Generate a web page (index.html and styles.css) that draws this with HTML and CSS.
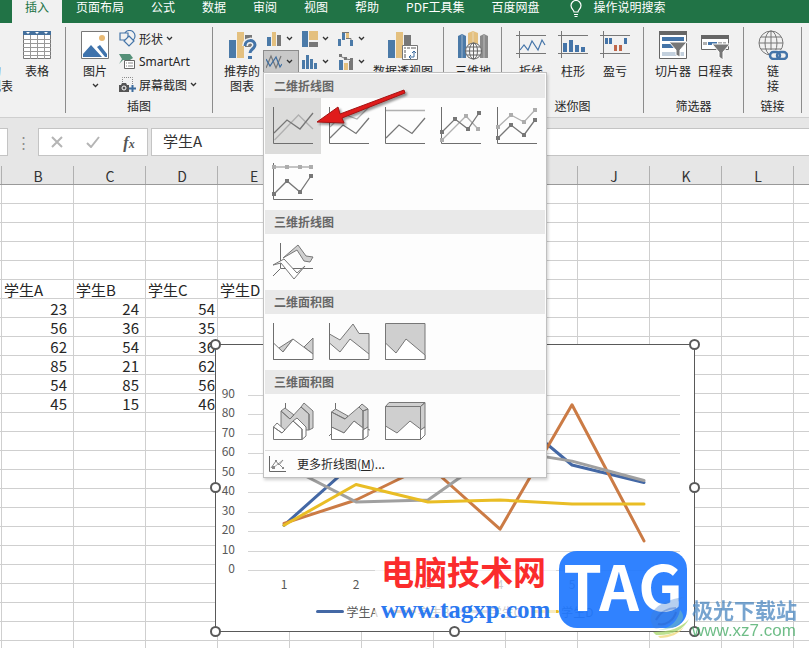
FILE: index.html
```
<!DOCTYPE html>
<html lang="zh-CN">
<head>
    <meta charset="UTF-8">
    <meta name="viewport" content="width=device-width, initial-scale=1.0">
    <title>学生成绩 - Excel</title>
    <link rel="stylesheet" href="styles.css">
</head>
<body>
    <svg class="defs" aria-hidden="true">
        <symbol id="chevron" viewBox="0 0 7 5"><path d="M1 1l2.5 2.5L6 1" fill="none" stroke="#333" stroke-width="1.3"/></symbol>
    </svg>

    <nav class="tabs">
        <a class="tab active" href="#">插入</a>
        <a class="tab" href="#">页面布局</a>
        <a class="tab" href="#">公式</a>
        <a class="tab" href="#">数据</a>
        <a class="tab" href="#">审阅</a>
        <a class="tab" href="#">视图</a>
        <a class="tab" href="#">帮助</a>
        <a class="tab" href="#">PDF工具集</a>
        <a class="tab" href="#">百度网盘</a>
        <a class="tab search" href="#">
            <svg width="12" height="18" viewBox="0 0 12 18" fill="none" stroke="#fff" stroke-width="1.2"><path d="M4 12c0-2-3-3-3-6.500a5 5 0 0 1 10 0C11 9 8 10 8 12zM4 14.500h4M4.500 16.500h3"/></svg>
            操作说明搜索
        </a>
    </nav>

    <div class="ribbon">
        <section class="group group-tables">
            <div class="tools">
                <button class="big"><span class="icon"></span>推荐的<br>数据透视表</button>
                <button class="big wide">
                    <svg class="icon" viewBox="0 0 30 30"><path d="M1.500 1.500h27v27h-27z" fill="#fff" stroke="#777"/><path d="M1 1h28v4H1z" fill="#44709d"/><path d="M4 2h4l-2 2zM13 2h4l-2 2zM22 2h4l-2 2z" fill="#fff"/><path d="M1 9.500h28M1 13.500h28M1 17.500h28M1 21.500h28M1 25.500h28M8.500 5v24M15.500 5v24M22.500 5v24" stroke="#999"/></svg>
                    表格
                </button>
            </div>
        </section>

        <section class="group group-pictures">
            <div class="tools">
                <button class="big narrow">
                    <svg class="icon" viewBox="0 0 30 30"><path d="M1.500 1.500h27v27h-27z" fill="#fff" stroke="#777"/><circle cx="22" cy="8" r="3" fill="#e8b973"/><path d="M3 27v-3l8-9 11 12zM17 17l3-2 7 9v3h-2z" fill="#3f73ac"/></svg>
                    图片
                    <svg class="chevron"><use href="#chevron"/></svg>
                </button>
                <div class="stack">
                    <button class="small">
                        <svg width="17" height="17" viewBox="0 0 17 17" fill="#f1f1f1" stroke="#4474a8" stroke-width="1.200"><circle cx="10.500" cy="6" r="5.500"/><path d="M1 3h8v7H1z"/><path d="M10 6l5 5-5 5-5-5z"/></svg>
                        形状 <svg class="chevron"><use href="#chevron"/></svg>
                    </button>
                    <button class="small">
                        <svg width="17" height="17" viewBox="0 0 17 17"><path d="M0 1h11l3 4-3 2H4l-4 4 3-5z" fill="#559078"/><path d="M5.500 7.500h10v8h-10z" fill="#fff" stroke="#666"/><path d="M7 10h1M9 10h5M7 13h1M9 13h5" stroke="#888"/></svg>
                        <span class="latin">SmartArt</span>
                    </button>
                    <button class="small">
                        <svg width="17" height="17" viewBox="0 0 17 17"><path d="M3.500 6V1.500h10V9" fill="none" stroke="#888" stroke-dasharray="1 1"/><path d="M0 9h2l1-2h4l1 2h2v7H0z" fill="#555"/><circle cx="5" cy="12" r="2" fill="#555" stroke="#fff"/><path d="M13.500 9v7M10 12.500h7" stroke="#3d6c9e" stroke-width="2"/></svg>
                        屏幕截图 <svg class="chevron"><use href="#chevron"/></svg>
                    </button>
                </div>
            </div>
            <h2>插图</h2>
        </section>

        <section class="group group-charts">
            <div class="tools">
                <button class="big">
                    <svg class="icon" viewBox="0 0 30 30"><path d="M2 10h7v18H2z" fill="#4b7aa8"/><path d="M10 2h7v26h-7z" fill="#e4c07f"/><path d="M18 5h7v12h-7z" fill="#777"/><path d="M18 16c0-7 10-7 10-1 0 4-5 4-5 8M21 27.500h4" fill="none" stroke="#f1f1f1" stroke-width="6"/><path d="M18 16c0-7 10-7 10-1 0 4-5 4-5 8" fill="none" stroke="#4474a8" stroke-width="3"/><path d="M21 26h4v3h-4z" fill="#4474a8"/></svg>
                    推荐的<br>图表
                </button>
                <div class="chart-types">
                    <button class="type" aria-label="柱形图"><svg width="16" height="16" viewBox="0 0 16 16"><path d="M1 6h4v9H1z" fill="#4b7aa8"/><path d="M6 1h4v14H6z" fill="#e4c07f"/><path d="M11 4h4v11h-4z" fill="#777"/></svg><svg class="chevron"><use href="#chevron"/></svg></button>
                    <button class="type" aria-label="层次结构图"><svg width="16" height="16" viewBox="0 0 16 16"><path d="M0 0h6v16H0z" fill="#4b7aa8"/><path d="M7 0h9v9H7z" fill="#e4c07f"/><path d="M7 11h9v5H7z" fill="#777"/></svg><svg class="chevron"><use href="#chevron"/></svg></button>
                    <button class="type" aria-label="瀑布图"><svg width="16" height="16" viewBox="0 0 16 16"><path d="M0 8h3v7H0zM4 2h3v7H4z" fill="#4b7aa8"/><path d="M8 2h3v5H8z" fill="#e4c07f"/><path d="M12 9h3v6h-3z" fill="#4b7aa8"/><path d="M4 1.500h7M8 7.500h5V9" fill="none" stroke="#777"/></svg><svg class="chevron"><use href="#chevron"/></svg></button>

                    <div class="dropdown">
                        <button class="type pressed" aria-label="折线图" aria-expanded="true"><svg width="16" height="16" viewBox="0 0 16 16" fill="none"><path d="M0 14L5 2l5 12 5-12" stroke="#777" stroke-width="1.200"/><path d="M0 5l4 7 6-9 4 10 2-3" stroke="#3d6c9e" stroke-width="1.200"/></svg><svg class="chevron"><use href="#chevron"/></svg></button>

                        <div class="menu">
                            <h3>二维折线图</h3>
                            <div class="gallery">
                                <button class="choice selected" aria-label="折线图">
                                    <svg viewBox="0 0 56 56"><path class="light" d="M9.500 42l24-25L48 31"/><path class="dark" d="M9 35l13-13 13 9 13-16"/><path class="axis" d="M8.500 9v36.500H48"/></svg>
                                </button>
                                <button class="choice" aria-label="堆积折线图">
                                    <svg viewBox="0 0 56 56"><path class="light" d="M9 29l13-13 14 5L48 9"/><path class="dark" d="M9 40l13-13 13 8.500L48 20"/><path class="axis" d="M8.500 9v36.500H48"/></svg>
                                </button>
                                <button class="choice" aria-label="百分比堆积折线图">
                                    <svg viewBox="0 0 56 56"><path class="light" d="M9 12.500h39"/><path class="dark" d="M9 40l13-13 13 8.500L48 20"/><path class="axis" d="M8.500 9v36.500H48"/></svg>
                                </button>
                                <button class="choice" aria-label="带数据标记的折线图">
                                    <svg viewBox="0 0 56 56"><path class="light" d="M9 42l24-24 12 13"/><path class="dark" d="M9 34l13-13 13 10 11-16"/><path class="axis" d="M8.500 9v36.500H48"/><path class="mark-light" d="M7 40h4v4H7zM31 16h4v4h-4zM43 29h4v4h-4z"/><path class="mark" d="M7 32h4v4H7zM20 19h4v4h-4zM33 29h4v4h-4zM44 13h4v4h-4z"/></svg>
                                </button>
                                <button class="choice" aria-label="带标记的堆积折线图">
                                    <svg viewBox="0 0 56 56"><path class="light" d="M9 29l13-12 13 7 11-12"/><path class="dark" d="M9 40l13-13 13 10 11-15"/><path class="axis" d="M8.500 9v36.500H48"/><path class="mark-light" d="M7 27h4v4H7zM20 15h4v4h-4zM33 22h4v4h-4zM44 10h4v4h-4z"/><path class="mark" d="M7 38h4v4H7zM20 25h4v4h-4zM33 35h4v4h-4zM44 20h4v4h-4z"/></svg>
                                </button>
                                <button class="choice" aria-label="带数据标记的百分比堆积折线图">
                                    <svg viewBox="0 0 56 56"><path class="light" d="M9 13h37"/><path class="dark" d="M9 40l13-13 13 11 11-16"/><path class="axis" d="M8.500 9v36.500H48"/><path class="mark-light" d="M7 11h4v4H7zM20 11h4v4h-4zM33 11h4v4h-4zM44 11h4v4h-4z"/><path class="mark" d="M7 38h4v4H7zM20 25h4v4h-4zM33 36h4v4h-4zM44 20h4v4h-4z"/></svg>
                                </button>
                            </div>

                            <h3>三维折线图</h3>
                            <div class="gallery">
                                <button class="choice" aria-label="三维折线图">
                                    <svg viewBox="0 0 56 56"><path class="axis" d="M15.500 9v25.500H48M15 35l-7 7"/><path class="face" d="M18 24l15-13 8 11 7 1-3 5-6-1-7-11z"/><path class="front" d="M8 31l11-6 13 14 8-7-11 13-13-16z"/></svg>
                                </button>
                            </div>

                            <h3>二维面积图</h3>
                            <div class="gallery">
                                <button class="choice" aria-label="面积图">
                                    <svg viewBox="0 0 56 56"><path class="face" d="M14 34l14-9-10 13zM39 33l9-9v16z"/><path class="front" d="M8.500 29l9.500 9 10-13 20 15v5.500H8.500z"/><path class="axis" d="M8.500 9v36.500H48"/></svg>
                                </button>
                                <button class="choice" aria-label="堆积面积图">
                                    <svg viewBox="0 0 56 56"><path class="face pale" d="M8.500 20L19 26l13-16 6 9.500h10V40L29 25 19 38l-10.500-9z"/><path class="axis" d="M8.500 9v36.500H48V40"/></svg>
                                </button>
                                <button class="choice" aria-label="百分比堆积面积图">
                                    <svg viewBox="0 0 56 56"><path class="face" d="M8.500 9.500H48v36H8.500z"/><path class="front" d="M8.500 29L19 39l10-14 19 16v4.500H8.500z"/></svg>
                                </button>
                            </div>

                            <h3>三维面积图</h3>
                            <div class="gallery">
                                <button class="choice" aria-label="三维面积图">
                                    <svg viewBox="0 0 56 56"><path class="axis" d="M20.500 9v6"/><path class="face" d="M16 17l4-3 9 7-4 4zM16 17l9 8 11-12 8 7v16H16zM36 13l3-4 9 8v17l-4 2V20z"/><path class="front" d="M8.500 33l3.500-4 8 7-3 3zM28 27l4-3 9 9v9l-4 3.500V35zM8.500 33l8.500 6 11-12 9 8v10.500H8.500z"/></svg>
                                </button>
                                <button class="choice" aria-label="三维堆积面积图">
                                    <svg viewBox="0 0 56 56"><path class="axis" d="M14.500 9v7M8 42l3-3M45 35l4 1"/><path class="face" d="M10.500 18l4-3L27 22l-3 3zM38 13l3-3 6 5-5 2zM42 17l5-2v18l-5 3zM10.500 18L24 25l14-12 4 4v17l-9-7-10 12-12.500-6z"/><path class="front" d="M42 36l5-3v9l-5 3.500zM10.500 33L23 39l10-12 9 7v11.500H10.500z"/></svg>
                                </button>
                                <button class="choice" aria-label="三维百分比堆积面积图">
                                    <svg viewBox="0 0 56 56"><path class="face" d="M8.500 12.500l3.500-4h36l-4.500 4zM43.500 12.500l4.500-4V33l-4.500 3zM8.500 12.500h35v33h-35z"/><path class="front" d="M43.500 36l4.500-3v8l-4.500 4.500zM8.500 32L20 39l13-12 10.500 8v10.500h-35z"/></svg>
                                </button>
                            </div>

                            <button class="more">
                                <svg width="17" height="16" viewBox="0 0 17 16" fill="none"><path d="M4 12l10-8" stroke="#aaa"/><path d="M2 12l5-7 3 4 4-5M9 7l6 6" stroke="#888"/><path d="M3 10h3v3H3zM13 11h2v2h-2zM6 4h2v2H6z" fill="#888"/><path d="M.5 0v15.500H17" stroke="#666"/></svg>
                                <span>更多折线图(<u>M</u>)...</span>
                            </button>
                        </div>
                    </div>
                    <button class="type" aria-label="统计图"><svg width="16" height="16" viewBox="0 0 16 16"><path d="M0 6h3v9H0zM4 1h3v14H4zM8 5h3v10H8zM12 9h3v6h-3z" fill="#4b7aa8"/></svg><svg class="chevron"><use href="#chevron"/></svg></button>
                    <button class="type" aria-label="组合图"><svg width="16" height="16" viewBox="0 0 16 16"><path d="M1 6h4v10H1z" fill="#4b7aa8"/><path d="M6 9h4v7H6z" fill="#e4c07f"/><path d="M11 7h4v9h-4z" fill="#777"/><path d="M2 2l6 3 6 1" fill="none" stroke="#777"/><path d="M1 0h3v3H1zM6 3h3v3H6zM12 4h3v3h-3z" fill="#777"/></svg><svg class="chevron"><use href="#chevron"/></svg></button>
                </div>
                <button class="big pivot">
                    <svg class="icon" viewBox="0 0 30 30"><path d="M0 10h7v18H0z" fill="#4b7aa8"/><path d="M8 2h7v26H8z" fill="#e4c07f"/><path d="M16 5h7v10h-7z" fill="#777"/><path d="M14.500 15.500h15v14h-15z" fill="#fff" stroke="#777"/><path d="M16 17h2v2h-2zM19 17h3v2h-3zM23 17h5v2h-5zM16 20h2v3h-2zM16 24h2v4h-2z" fill="#aaa"/><path d="M21 27h5v-6M23 25l-2 2 2 2M24 23l2-2 2 2" fill="none" stroke="#3d6c9e"/></svg>
                    数据透视图
                </button>
            </div>
        </section>

        <section class="group group-map">
            <div class="tools">
                <button class="big">
                    <svg class="icon" viewBox="0 0 30 30"><path d="M0 6l4-2 4 2v22H0z" fill="#4b7aa8"/><path d="M10 3l5-2 5 2v25H10z" fill="#e4c07f"/><path d="M22 6l4-2 4 2v22h-8z" fill="#8a8a8a"/><path d="M4 5v23M26 5v23M15 2v12" stroke="#f1f1f1" stroke-opacity=".5"/><g fill="#f6f6f6" stroke="#666"><circle cx="15.500" cy="21" r="8"/><ellipse cx="15.500" cy="21" rx="4" ry="8" fill="none"/><path d="M7.500 21h16M15.500 13v16M9 17h13M9 25h13"/></g></svg>
                    三维地<br>图
                </button>
            </div>
        </section>

        <section class="group group-spark">
            <div class="tools">
                <button class="big">
                    <svg class="icon" viewBox="0 0 30 30" fill="none"><path d="M3.500 1v27M0 5.500h30M0 23.500h30" stroke="#777"/><path d="M4 20l4-5 4 5 4-9 6 9 4-10 3 5" stroke="#4474a8" stroke-width="1.200"/></svg>
                    折线
                </button>
                <button class="big">
                    <svg class="icon" viewBox="0 0 30 30"><path d="M3.500 1v27M0 5.500h30M0 23.500h30" stroke="#777"/><path d="M5 13h4v9H5zM11 10h4v12h-4zM17 15h4v7h-4zM23 17h4v5h-4z" fill="#4474a8"/></svg>
                    柱形
                </button>
                <button class="big">
                    <svg class="icon" viewBox="0 0 30 30"><path d="M3.500 1v27M0 5.500h30M0 23.500h30" stroke="#777"/><path d="M5 8h3v6H5zM9 8h3v6H9zM24 8h3v6h-3z" fill="#4474a8"/><path d="M14 15h3v6h-3zM19 15h3v6h-3z" fill="#c0674a"/></svg>
                    盈亏
                </button>
            </div>
            <h2>迷你图</h2>
        </section>

        <section class="group group-filter">
            <div class="tools">
                <button class="big">
                    <svg class="icon" viewBox="0 0 30 30"><path d="M1.500 1.500h27v27h-27z" fill="#fff" stroke="#666"/><path d="M1 1h28v4H1z" fill="#666"/><path d="M4 7h22v4H4z" fill="#4474a8"/><path d="M4 14h12v4H4z" fill="#4474a8"/><path d="M4 22h22v4H4z" fill="#c3d0dd"/><path d="M11 12h18l-7 8v7l-4-2v-5z" fill="#777" stroke="#fff"/></svg>
                    切片器
                </button>
                <button class="big">
                    <svg class="icon" viewBox="0 0 30 30"><path d="M1.500 5.500h27v14h-27z" fill="#fff" stroke="#666"/><path d="M1 5h28v4H1z" fill="#666"/><path d="M3 12h4v3H3zM18 12h4v3h-4zM23 12h3v3h-3z" fill="#b0b0b0"/><path d="M8 12h9v3H8z" fill="#4474a8"/><path d="M12 14h18l-7 8v8l-4-3v-5z" fill="#777" stroke="#fff"/></svg>
                    日程表
                </button>
            </div>
            <h2>筛选器</h2>
        </section>

        <section class="group group-links">
            <div class="tools">
                <button class="big">
                    <svg class="icon" viewBox="0 0 30 30" fill="none"><g stroke="#777"><circle cx="13" cy="13" r="12"/><ellipse cx="13" cy="13" rx="6" ry="12"/><path d="M1 13h24M13 1v24M3 7h20M3 19h20"/></g><path d="M12 20h18v10H12z" fill="#f1f1f1"/><g stroke="#4474a8" stroke-width="2.500"><rect x="12" y="22" width="10" height="7" rx="3.500"/><rect x="19" y="22" width="10" height="7" rx="3.500"/></g></svg>
                    链<br>接
                </button>
            </div>
            <h2>链接</h2>
        </section>
    </div>

    <div class="formula-bar">
        <div class="name-box"></div>
        <div class="dots">⋮</div>
        <div class="formula-tools">
            <button aria-label="取消"><svg width="12" height="12" viewBox="0 0 12 12"><path d="M1 1l10 10M11 1L1 11" stroke="#b5b5b5" stroke-width="2"/></svg></button>
            <button aria-label="输入"><svg width="14" height="12" viewBox="0 0 14 12"><path d="M1 7l4 4 8-10" fill="none" stroke="#b5b5b5" stroke-width="2"/></svg></button>
            <button class="fx" aria-label="插入函数">f<small>x</small></button>
        </div>
        <input class="formula" type="text" value="学生A" aria-label="编辑栏">
    </div>

    <main class="sheet">
        <table>
            <colgroup id="cols"></colgroup>
            <thead><tr id="letters"></tr></thead>
            <tbody id="cells"></tbody>
        </table>

        <div class="chart">
            <svg id="plot" viewBox="0 0 480 288"></svg>
            <div class="legend" id="legend"></div>
            <span class="handle nw"></span>
            <span class="handle ne"></span>
            <span class="handle w"></span>
            <span class="handle e"></span>
            <span class="handle sw"></span>
            <span class="handle s"></span>
            <span class="handle se"></span>
        </div>

        <div class="site-mark">
            <strong>电脑技术网</strong>
            <span>www.tagxp.com</span>
        </div>
        <div class="tag-mark">TAG</div>
        <div class="download-mark">
            <svg width="42" height="42" viewBox="0 0 42 42"><path d="M1 26C-1 12 14 4 34 1 22 6 34 12 28 20 22 29 8 34 4 32z" fill="#3f7fd6" opacity=".5"/><path d="M6 24c4-8 12-12 20-12M8 28c8 2 16-4 18-12" fill="none" stroke="#2a62c8" stroke-width="2" opacity=".6"/><path d="M8 34c14-2 20-10 22-20 8 8 0 20-22 20z" fill="#7ec8b0" opacity=".6"/><path d="M3 36c16 0 28-4 36-13-5 11-18 17-33 16z" fill="#a8d86a"/><path d="M8 40c12-1 20-4 26-9-5 7-14 11-24 11z" fill="#f0d878"/></svg>
            <div>
                <strong>极光下载站</strong>
                <span>www.xz7.com</span>
            </div>
        </div>
    </main>

    <svg class="pointer" width="100" height="44" viewBox="0 0 100 44">
        <path d="M3 35L24 20l2 7L90 3l1 3L28 31l2 5z" fill="#e01b1b" stroke="#a31414" stroke-width="1"/>
    </svg>

    <script>
        const letters = ['', 'B', 'C', 'D', 'E', 'F', 'G', 'H', 'I', 'J', 'K', 'L', ''];
        const rowCount = 25;
        const firstDataRow = 5;
        const series = [
            { name: '学生A', color: '#4468a5', values: [23, 56, 62, 85, 54, 45] },
            { name: '学生B', color: '#cb7b45', values: [24, 36, 54, 21, 85, 15] },
            { name: '学生C', color: '#a0a0a0', values: [54, 35, 36, 62, 56, 46] },
            { name: '学生D', color: '#e9bd25', values: [23, 44, 35, 36, 34, 34] }
        ];

        function buildSheet() {
            document.getElementById('cols').innerHTML = letters.map((l, i) => `<col class="${i ? 'col' : 'col-edge'}">`).join('');
            document.getElementById('letters').innerHTML = letters.map(l => `<th>${l}</th>`).join('');
            let html = '';
            for (let r = 0; r < rowCount; r++) {
                html += '<tr>';
                for (let c = 0; c < letters.length; c++) {
                    const s = series[c - 1];
                    const i = r - firstDataRow;
                    if (s && i === 0) {
                        html += `<td>${s.name}</td>`;
                    } else if (s && i > 0 && i <= 6) {
                        html += `<td class="${c < 3 ? 'num indent' : 'num'}">${s.values[i - 1]}</td>`;
                    } else {
                        html += '<td></td>';
                    }
                }
                html += '</tr>';
            }
            document.getElementById('cells').innerHTML = html;
        }

        function buildChart() {
            const left = 33, right = 465, bottom = 226, top = 51;
            const x = i => left + (i + 0.5) * (right - left) / 6;
            const y = v => bottom - v * (bottom - top) / 90;
            let svg = '';
            for (let v = 0; v <= 90; v += 10) {
                const line = Math.round(y(v)) + 0.5;
                svg += `<path class="grid-line" d="M${left} ${line}H${right}"/>`;
                svg += `<text class="tick end" x="20" y="${Math.round(y(v)) + 3}">${v}</text>`;
            }
            for (let i = 0; i < 6; i++) {
                svg += `<text class="tick middle" x="${x(i)}" y="245">${i + 1}</text>`;
            }
            series.forEach(s => {
                svg += `<polyline class="line" stroke="${s.color}" points="${s.values.map((v, i) => x(i) + ',' + y(v)).join(' ')}"/>`;
            });
            document.getElementById('plot').innerHTML = svg;
            document.getElementById('legend').innerHTML = series.map(s => `<span class="key"><i style="background: ${s.color}"></i>${s.name}</span>`).join('');
        }

        buildSheet();
        buildChart();
    </script>
</body>
</html>
```

FILE: styles.css
```
* {
    box-sizing: border-box;
}
body {
    display: flex;
    flex-direction: column;
    height: 100vh;
    margin: 0;
    overflow: hidden;
    position: relative;
    background-color: #fff;
    color: #262626;
    font-family: "Noto Sans CJK SC", sans-serif;
    font-size: 12px;
    line-height: 15px;
}
button {
    padding: 0;
    border: 0;
    background: none;
    color: inherit;
    font: inherit;
    cursor: pointer;
}
h2, h3 {
    margin: 0;
    font-size: 12px;
    line-height: 15px;
}
.defs {
    display: none;
}
.chevron {
    width: 7px;
    height: 5px;
    flex: none;
}

/* tabs */
.tabs {
    display: flex;
    flex: none;
    gap: 1px;
    height: 23px;
    padding-left: 12px;
    background-color: #217346;
}
.tab {
    padding: 0 13px;
    color: #fff;
    line-height: 14px;
    text-decoration: none;
    white-space: nowrap;
}
.tab.active {
    background-color: #f1f1f1;
    color: #217346;
}
.tab.search {
    display: flex;
    gap: 12px;
    margin-left: 3px;
}

/* ribbon */
.ribbon {
    display: flex;
    flex: none;
    height: 95px;
    padding: 4px 0;
    background-color: #f1f1f1;
    border-bottom: 1px solid #cfcfcf;
}
.group {
    display: flex;
    flex: none;
    flex-direction: column;
    justify-content: space-between;
    border-right: 1px solid #8c8c8c;
}
.group h2 {
    font-weight: normal;
    text-align: center;
}
.tools {
    display: flex;
}
.group-tables {
    width: 66px;
    overflow: hidden;
}
.group-tables .tools {
    justify-content: flex-end;
    padding-right: 4px;
}
.group-pictures {
    width: 147px;
}
.group-pictures .tools {
    gap: 6px;
    padding-left: 11px;
}
.group-charts {
    width: 231px;
}
.group-charts .tools,
.group-map .tools,
.group-spark .tools,
.group-filter .tools,
.group-links .tools {
    padding-left: 8px;
}
.group-map,
.group-links {
    width: 58px;
}
.group-spark {
    width: 142px;
}
.group-filter {
    width: 100px;
}
.big {
    flex: none;
    min-width: 42px;
    padding-top: 3px;
    align-self: flex-start;
    white-space: nowrap;
}
.big .icon {
    display: block;
    width: 30px;
    height: 30px;
    margin: 0 auto 3px;
}
.big .chevron {
    display: block;
    margin: 5px auto 0;
}
.big.wide {
    min-width: 48px;
}
.big.narrow {
    min-width: 36px;
}
.big.pivot {
    min-width: 64px;
}
.stack {
    display: flex;
    flex-direction: column;
}
.small {
    display: flex;
    align-items: center;
    gap: 3px;
    height: 23px;
    line-height: 18px;
    white-space: nowrap;
}
.latin {
    font-family: "Noto Sans", sans-serif;
}
.chart-types {
    display: grid;
    grid-template-columns: repeat(3, 36px);
    grid-auto-rows: 23px;
}
.type {
    display: flex;
    align-items: center;
    gap: 4px;
    width: 36px;
    height: 23px;
    padding-left: 3px;
}
.type.pressed {
    padding-left: 2px;
    background-color: #c8c8c8;
    border: 1px solid #8c8c8c;
}

/* chart menu */
.dropdown {
    position: relative;
}
.menu {
    position: absolute;
    top: 22px;
    left: 0;
    z-index: 10;
    width: 284px;
    padding: 1px;
    background-color: #fdfdfd;
    border: 1px solid #c0c0c0;
    box-shadow: 1px 2px 3px rgba(0, 0, 0, 0.2);
}
.menu h3 {
    padding-left: 9px;
    background-color: #e9e9e9;
    color: #666;
    line-height: 23px;
    height: 24px;
}
.gallery {
    display: grid;
    grid-template-columns: repeat(5, 56px);
}
.choice {
    height: 56px;
}
.choice.selected {
    background-color: #dcdcdb;
}
.choice svg {
    display: block;
    width: 56px;
    height: 56px;
    fill: none;
}
.light {
    stroke: #b0b0b0;
    stroke-width: 1.3;
}
.dark {
    stroke: #777;
    stroke-width: 1.3;
}
.axis {
    stroke: #6e6e6e;
}
.mark {
    fill: #777;
}
.mark-light {
    fill: #adadad;
}
.face {
    fill: #cfcfcf;
    stroke: #777;
}
.face.pale {
    fill: #d9d9d9;
}
.front {
    fill: #fff;
    stroke: #777;
}
.more {
    display: flex;
    align-items: center;
    gap: 11px;
    width: 100%;
    height: 26px;
    padding-left: 4px;
    border-top: 1px solid #dcdcdc;
}

/* formula bar */
.formula-bar {
    display: flex;
    flex: none;
    height: 38px;
    padding-top: 10px;
    background-color: #e6e6e6;
}
.name-box {
    width: 8px;
    background-color: #fff;
    border: 1px solid #c4c4c4;
    border-left: 0;
}
.dots {
    width: 30px;
    color: #8c8c8c;
    font-size: 15px;
    line-height: 28px;
    text-align: center;
}
.formula-tools {
    display: flex;
    width: 110px;
    margin-right: 3px;
    background-color: #fff;
    border: 1px solid #c4c4c4;
}
.formula-tools button {
    display: flex;
    flex: 1;
    align-items: center;
    justify-content: center;
}
.formula-tools .fx {
    color: #555;
    font-family: "Liberation Serif", serif;
    font-size: 16px;
    font-style: italic;
    font-weight: bold;
}
.fx small {
    padding-top: 4px;
    font-size: 12px;
}
.formula {
    flex: 1;
    min-width: 0;
    padding: 0 11px 3px;
    border: 1px solid #c4c4c4;
    border-right: 0;
    outline: 0;
    color: #333;
    font-family: inherit;
    font-size: 15px;
}

/* sheet */
.sheet {
    flex: 1;
    min-height: 0;
    overflow: hidden;
    position: relative;
}
table {
    width: 866px;
    table-layout: fixed;
    border-spacing: 0;
}
.col {
    width: 72px;
}
.col-edge {
    width: 2px;
}
th {
    height: 29px;
    padding: 12px 0 0;
    background: linear-gradient(#b0b0b0, #b0b0b0) right bottom / 1px 18px no-repeat #e6e6e6;
    border-bottom: 1px solid #999;
    color: #333;
    font-size: 14px;
    font-weight: normal;
    line-height: 16px;
}
td {
    height: 19px;
    padding: 2px 2px 0;
    border-right: 1px solid #cfcfcf;
    border-bottom: 1px solid #cfcfcf;
    font-size: 15px;
    line-height: 16px;
    white-space: nowrap;
}
th:first-child,
td:first-child {
    padding: 0;
}
.num {
    text-align: right;
}
.num.indent {
    padding-right: 6px;
}

/* chart object */
.chart {
    position: absolute;
    top: 188px;
    left: 215px;
    width: 480px;
    height: 288px;
    background-color: #fff;
    border: 1px solid #595959;
}
#plot {
    position: absolute;
    top: -1px;
    left: -1px;
    width: 480px;
    height: 288px;
}
.grid-line {
    stroke: #d4d4d4;
}
.tick {
    fill: #595959;
    font-size: 12px;
}
.tick.end {
    text-anchor: end;
}
.tick.middle {
    text-anchor: middle;
}
.line {
    fill: none;
    stroke-width: 3;
    stroke-linecap: round;
    stroke-linejoin: round;
}
.legend {
    position: absolute;
    right: 0;
    bottom: 12px;
    left: 0;
    display: flex;
    justify-content: center;
    gap: 10px;
    color: #595959;
}
.key {
    display: flex;
    align-items: center;
    gap: 2px;
}
.key i {
    width: 28px;
    height: 3px;
    border-radius: 2px;
}
.handle {
    position: absolute;
    width: 11px;
    height: 11px;
    margin: -6px;
    background-color: #fff;
    border: 2px solid #595959;
    border-radius: 50%;
}
.nw, .ne {
    top: 0;
}
.w, .e {
    top: 50%;
}
.sw, .s, .se {
    bottom: 0;
}
.nw, .w, .sw {
    left: 0;
}
.ne, .e, .se {
    right: 0;
}
.s {
    left: 50%;
}

/* marks over the sheet */
.site-mark {
    position: absolute;
    top: 396px;
    left: 375px;
    display: flex;
    flex-direction: column;
    gap: 5px;
    padding: 0 6px;
    background-color: rgba(255, 255, 255, 0.7);
    white-space: nowrap;
}
.site-mark strong {
    color: #fb2c2c;
    font-size: 33px;
    line-height: 38px;
}
.site-mark span {
    color: #2b78f0;
    font-family: "Liberation Serif", serif;
    font-size: 25px;
    font-weight: bold;
    line-height: 30px;
}
.tag-mark {
    position: absolute;
    top: 395px;
    left: 559px;
    width: 128px;
    height: 77px;
    background-color: rgba(32, 120, 255, 0.93);
    border-radius: 18px;
    color: #fff;
    font-size: 62px;
    font-weight: bold;
    line-height: 66px;
    text-align: center;
}
.download-mark {
    position: absolute;
    top: 440px;
    left: 650px;
    display: flex;
    opacity: 0.75;
    white-space: nowrap;
}
.download-mark div {
    display: flex;
    flex-direction: column;
}
.download-mark strong {
    color: #4a86c0;
    font-size: 21px;
    line-height: 26px;
}
.download-mark span {
    color: #3fa860;
    font-family: "Liberation Sans", sans-serif;
    font-size: 17px;
    line-height: 18px;
}
.pointer {
    position: absolute;
    top: 87px;
    left: 314px;
    z-index: 20;
    filter: drop-shadow(2px 2px 1px rgba(0, 0, 0, 0.4));
}
```
